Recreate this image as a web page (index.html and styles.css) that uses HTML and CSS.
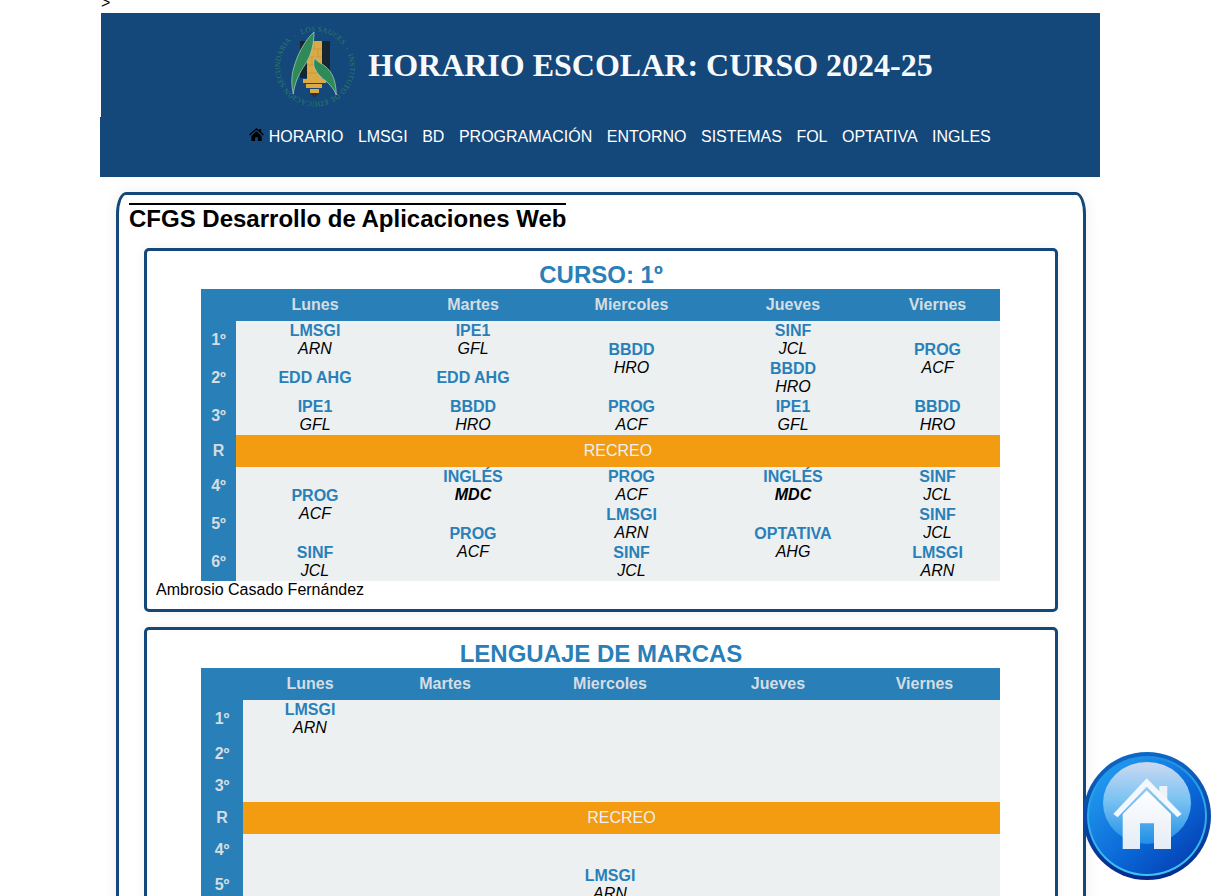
FILE: index.html
```html
<!DOCTYPE html>
<html lang="es">
<head>
  <meta charset="UTF-8" />
  <title>Horario Escolar</title>
  <link rel="stylesheet" href="styles.css">
</head>
<body>
  <div class="stray">&gt;</div>
  <header class="banner">
    <svg class="logo" viewBox="270 20 92 92" width="92" height="92" aria-label="IES Los Sauces">
      <defs>
        <path id="ring" d="M 316 32.500 A 35 35 0 1 1 316 102.500 A 35 35 0 1 1 316 32.500"/>
      </defs>
      <text class="ring-text" transform="rotate(-23 316 67.500)"><textPath href="#ring" textLength="214">LOS SAUCES  -  INSTITUTO DE EDUCACIÓN SECUNDARIA  -</textPath></text>
      <rect x="301" y="42" width="30" height="37" fill="#16252f"/>
      <rect x="308" y="42" width="15" height="38" fill="#dcaa45"/>
      <path class="bricks" d="M308 50h15M308 58h15M308 66h15M308 74h15M315 42v8M319 50v8M313 58v8M318 66v8"/>
      <rect x="304" y="80" width="23" height="4" fill="#dcaa45"/>
      <rect x="307" y="85" width="16" height="4" fill="#dcaa45"/>
      <rect x="311" y="90" width="9" height="4" fill="#dcaa45"/>
      <path d="M311 94h9l-4.500 5z" fill="#3a2f28"/>
      <path class="leaf" d="M315 33C315 48 311 58 306.500 65C301 73 296 82 294.300 95C292 85 292.500 76 295 68C298 57 305 42 315 33z"/>
      <path class="leaf" d="M316 58.300C317 62 320 63 323 65C331 70 337 78 337.300 96C335 90 332 87 328 83C323 79 319 76 316 70C314 66 314.500 62 316 58.300z"/>
    </svg>
    <h1>HORARIO ESCOLAR: CURSO 2024-25</h1>
  </header>

  <nav class="menu">
    <ul>
      <li>
        <svg class="home-glyph" viewBox="0 0 16 14" width="15" height="13"><path d="M8 0l3 2.600V1h2v3.300l3 2.700-.9 1L8 1.900 .9 8 0 7zM2.500 8.500L8 3.600l5.500 4.900V14H9.500v-4h-3v4H2.500z"/></svg>
        HORARIO
      </li>
      <li>LMSGI</li>
      <li>BD</li>
      <li>PROGRAMACIÓN</li>
      <li>ENTORNO</li>
      <li>SISTEMAS</li>
      <li>FOL</li>
      <li>OPTATIVA</li>
      <li>INGLES</li>
    </ul>
  </nav>

  <main class="box">
    <h2>CFGS Desarrollo de Aplicaciones Web</h2>

    <section class="card">
      <h3>CURSO: 1º</h3>
      <table class="timetable course">
        <colgroup><col class="c0"><col class="c1"><col class="c2"><col class="c3"><col class="c4"><col class="c5"></colgroup>
        <tr class="head"><th></th><th>Lunes</th><th>Martes</th><th>Miercoles</th><th>Jueves</th><th>Viernes</th></tr>
        <tr>
          <th>1º</th>
          <td><b>LMSGI</b><i>ARN</i></td>
          <td><b>IPE1</b><i>GFL</i></td>
          <td rowspan="2"><b>BBDD</b><i>HRO</i></td>
          <td><b>SINF</b><i>JCL</i></td>
          <td rowspan="2"><b>PROG</b><i>ACF</i></td>
        </tr>
        <tr>
          <th>2º</th>
          <td><b>EDD AHG</b></td>
          <td><b>EDD AHG</b></td>
          <td><b>BBDD</b><i>HRO</i></td>
        </tr>
        <tr>
          <th>3º</th>
          <td><b>IPE1</b><i>GFL</i></td>
          <td><b>BBDD</b><i>HRO</i></td>
          <td><b>PROG</b><i>ACF</i></td>
          <td><b>IPE1</b><i>GFL</i></td>
          <td><b>BBDD</b><i>HRO</i></td>
        </tr>
        <tr class="break"><th>R</th><td colspan="5">RECREO</td></tr>
        <tr>
          <th>4º</th>
          <td rowspan="2"><b>PROG</b><i>ACF</i></td>
          <td><b>INGLÉS</b><i class="strong">MDC</i></td>
          <td><b>PROG</b><i>ACF</i></td>
          <td><b>INGLÉS</b><i class="strong">MDC</i></td>
          <td><b>SINF</b><i>JCL</i></td>
        </tr>
        <tr>
          <th>5º</th>
          <td rowspan="2"><b>PROG</b><i>ACF</i></td>
          <td><b>LMSGI</b><i>ARN</i></td>
          <td rowspan="2"><b>OPTATIVA</b><i>AHG</i></td>
          <td><b>SINF</b><i>JCL</i></td>
        </tr>
        <tr>
          <th>6º</th>
          <td><b>SINF</b><i>JCL</i></td>
          <td><b>SINF</b><i>JCL</i></td>
          <td><b>LMSGI</b><i>ARN</i></td>
        </tr>
      </table>
      <p class="teacher">Ambrosio Casado Fernández</p>
    </section>

    <section class="card">
      <h3>LENGUAJE DE MARCAS</h3>
      <table class="timetable subject">
        <colgroup><col class="c0"><col class="c1"><col class="c2"><col class="c3"><col class="c4"><col class="c5"></colgroup>
        <tr class="head"><th></th><th>Lunes</th><th>Martes</th><th>Miercoles</th><th>Jueves</th><th>Viernes</th></tr>
        <tr><th>1º</th><td><b>LMSGI</b><i>ARN</i></td><td></td><td></td><td></td><td></td></tr>
        <tr class="empty"><th>2º</th><td></td><td></td><td></td><td></td><td></td></tr>
        <tr class="empty"><th>3º</th><td></td><td></td><td></td><td></td><td></td></tr>
        <tr class="break"><th>R</th><td colspan="5">RECREO</td></tr>
        <tr class="empty"><th>4º</th><td></td><td></td><td></td><td></td><td></td></tr>
        <tr><th>5º</th><td></td><td></td><td><b>LMSGI</b><i>ARN</i></td><td></td><td></td></tr>
        <tr class="empty"><th>6º</th><td></td><td></td><td></td><td></td><td></td></tr>
      </table>
      <p class="teacher">Ambrosio Casado Fernández</p>
    </section>
  </main>

  <!-- fixed button, stays over the page -->
  <a class="home-btn" href="#" aria-label="Inicio">
    <svg viewBox="1083 752 128 128" width="128" height="128">
      <defs>
        <linearGradient id="rim" x1="0" y1="0" x2="0" y2="1">
          <stop offset="0" stop-color="#0f68c4"/>
          <stop offset="1" stop-color="#052a8c"/>
        </linearGradient>
        <linearGradient id="ringLight" x1="0" y1="0" x2="0" y2="1">
          <stop offset="0" stop-color="#1f8fe6"/>
          <stop offset="1" stop-color="#3cc4f6"/>
        </linearGradient>
        <linearGradient id="ball" x1="0.1" y1="0.2" x2="0.8" y2="0.95">
          <stop offset="0" stop-color="#1f96ec"/>
          <stop offset="0.6" stop-color="#0a66d6"/>
          <stop offset="1" stop-color="#0543b6"/>
        </linearGradient>
        <linearGradient id="shine" x1="0" y1="0" x2="0" y2="1">
          <stop offset="0" stop-color="#ccd9f1"/>
          <stop offset="0.45" stop-color="#7cc4f3"/>
          <stop offset="1" stop-color="#1f8fe6"/>
        </linearGradient>
        <linearGradient id="wall" x1="0" y1="0" x2="0" y2="1">
          <stop offset="0" stop-color="#ffffff"/>
          <stop offset="1" stop-color="#e4ecf6"/>
        </linearGradient>
      </defs>
      <circle cx="1147" cy="816" r="64" fill="url(#rim)"/>
      <circle cx="1147" cy="816" r="60" fill="url(#ringLight)"/>
      <circle cx="1147" cy="816" r="58" fill="url(#ball)"/>
      <ellipse cx="1147" cy="803" rx="44" ry="41" fill="url(#shine)"/>
      <path d="M1122.700 814L1146.700 790.500L1171 814V849H1154V823.300H1140V849H1122.700z" fill="url(#wall)"/>
      <path d="M1159.300 786H1167.300V800H1159.300z" fill="#eef3fa"/>
      <path d="M1146.700 778.300L1181.700 814L1177.300 817.300L1146.700 786.700L1117.700 817.300L1113.300 814z" fill="#f4f7fb"/>
    </svg>
  </a>
</body>
</html>
```
FILE: styles.css
```css
* {
  box-sizing: border-box;
}

body {
  margin: 0 0 0 100px;
  width: 1000px;
  font-family: "Liberation Sans", Arial, sans-serif;
  font-size: 16px;
  color: #000;
  background: #fff;
}

.stray {
  height: 13px;
  margin-left: 1px;
  line-height: 6px;
}

.banner {
  display: flex;
  justify-content: center;
  align-items: center;
  gap: 7px;
  width: 1000px;
  height: 104px;
  margin-left: 1px;
  background: #14477a;
}

.banner h1 {
  margin: 0;
  font-family: "Liberation Serif", "Times New Roman", serif;
  font-size: 32px;
  font-weight: bold;
  color: #f7f9fb;
}

.ring-text {
  font-family: "Liberation Serif", serif;
  font-size: 7.5px;
  fill: #2b8060;
  white-space: pre;
}

.leaf {
  fill: #2e8b57;
  stroke: #b9cfc8;
  stroke-width: 0.7;
}

.bricks {
  fill: none;
  stroke: #b58a35;
  stroke-width: 0.5;
}

.menu {
  height: 60px;
  background: #14477a;
}

.menu ul {
  display: flex;
  justify-content: center;
  gap: 14.5px;
  margin: 0;
  padding: 11px 0 0 40px;
  list-style: none;
}

.menu li {
  line-height: 18px;
  color: #fff;
}

.home-glyph {
  fill: #000;
  vertical-align: 1px;
}

.box {
  width: 970px;
  margin: 15px 0 0 16px;
  padding: 8px 25px 15px;
  border: 3px solid #14477a;
  border-radius: 10px / 22px;
  box-shadow: 0 0 15px rgba(0, 0, 0, 0.07);
}

.box h2 {
  display: inline-block;
  margin: 0 0 16px -15px;
  border-top: 2px solid #000;
  font-size: 24px;
  line-height: 27px;
  vertical-align: top;
}

.card {
  margin-bottom: 15px;
  padding-bottom: 10px;
  border: 3px solid #14477a;
  border-radius: 5px;
  box-shadow: 0 0 12px rgba(0, 0, 0, 0.06);
}

.card h3 {
  margin: 0;
  height: 38px;
  padding-top: 10px;
  font-size: 24px;
  line-height: 27px;
  text-align: center;
  color: #2980b9;
}

.timetable {
  width: 799px;
  margin: 0 0 0 54px;
  border-collapse: collapse;
  table-layout: fixed;
  line-height: 18px;
  text-align: center;
  background: #ecf0f1;
}

.course .c0 { width: 35px; }
.course .c1 { width: 158px; }
.course .c2 { width: 158px; }
.course .c3 { width: 159px; }
.course .c4 { width: 164px; }
.course .c5 { width: 125px; }

.subject .c0 { width: 42px; }
.subject .c1 { width: 134px; }
.subject .c2 { width: 136px; }
.subject .c3 { width: 194px; }
.subject .c4 { width: 142px; }
.subject .c5 { width: 151px; }

.timetable th {
  padding: 0;
  background: #2980b9;
  color: #d5dde1;
}

.timetable td {
  height: 38px;
  padding: 1px;
}

.timetable b {
  display: block;
  color: #2980b9;
}

.timetable i {
  display: block;
}

.timetable i.strong {
  font-weight: bold;
}

.timetable .head th {
  height: 32px;
}

.timetable .empty td,
.timetable .break td {
  height: 32px;
}

.timetable .break td {
  background: #f39c12;
  color: #ecf0f1;
}

.teacher {
  margin: 0 0 0 9px;
  line-height: 18px;
}

.home-btn {
  position: fixed;
  left: 1083px;
  top: 752px;
  display: block;
  width: 128px;
  height: 128px;
}
```
